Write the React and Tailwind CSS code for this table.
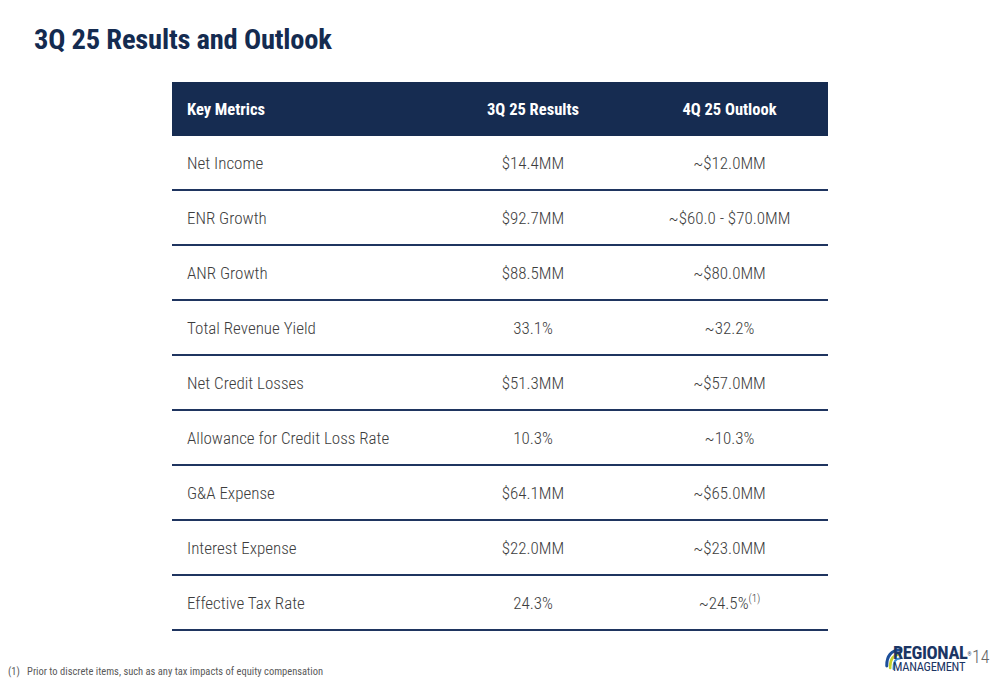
import React from "react";

const font = { fontFamily: "'Roboto Condensed','Liberation Sans Narrow','DejaVu Sans Condensed',sans-serif" };

const rows = [
  ["Net Income", "$14.4MM", "~$12.0MM"],
  ["ENR Growth", "$92.7MM", "~$60.0 - $70.0MM"],
  ["ANR Growth", "$88.5MM", "~$80.0MM"],
  ["Total Revenue Yield", "33.1%", "~32.2%"],
  ["Net Credit Losses", "$51.3MM", "~$57.0MM"],
  ["Allowance for Credit Loss Rate", "10.3%", "~10.3%"],
  ["G&A Expense", "$64.1MM", "~$65.0MM"],
  ["Interest Expense", "$22.0MM", "~$23.0MM"],
  ["Effective Tax Rate", "24.3%", "~24.5%"],
];

function Logo() {
  return (
    <div className="relative w-[84px] h-[26px]">
      <svg width="16" height="26" viewBox="0 0 16 26" className="absolute left-0 top-0">
        <path d="M15 2 C6.5 2 1.5 8 1.8 18" stroke="#1d4f9a" strokeWidth="3" fill="none" strokeLinecap="round" />
        <path d="M15 6.5 C8.5 6.5 4.8 11 5.2 20" stroke="#c5d22b" strokeWidth="2.6" fill="none" strokeLinecap="round" />
        <path d="M15 10.5 C10.5 10.5 8.2 14 8.5 21" stroke="#3a8fd6" strokeWidth="2" fill="none" strokeLinecap="round" />
      </svg>
      <div className="absolute left-[8px] top-[-2px] flex flex-col">
        <span className="text-[18.5px] font-bold text-[#1b3564] tracking-[-0.4px] leading-[15px]">
          REGIONAL<span className="text-[5px] align-top relative top-[1px]">®</span>
        </span>
        <span className="text-[12.5px] text-[#1b3564] tracking-[-0.3px] leading-[12px]">MANAGEMENT</span>
      </div>
    </div>
  );
}

export default function App() {
  return (
    <div className="w-[1000px] h-[685px] bg-white relative overflow-hidden" style={font}>
      <h1 className="pl-[34px] pt-[22px] text-[28.5px] font-bold text-[#142b50] leading-[36px] tracking-[-0.2px]">
        3Q 25 Results and Outlook
      </h1>
      <div className="ml-[172px] mt-[24px] w-[656px]">
        <div className="flex h-[54px] items-center bg-[#162c51] text-white font-bold text-[16.5px] pt-[2px]">
          <div className="w-[263px] pl-[15px]">Key Metrics</div>
          <div className="w-[196px] text-center">3Q 25 Results</div>
          <div className="w-[197px] text-center">4Q 25 Outlook</div>
        </div>
        {rows.map((r, i) => (
          <div
            key={i}
            className="flex h-[55px] items-center border-b-2 border-[#1f3560] text-[#3d3d3d] font-light text-[17px] pt-[2px]"
          >
            <div className="w-[263px] pl-[15px]">{r[0]}</div>
            <div className="w-[196px] text-center">{r[1]}</div>
            <div className="w-[197px] text-center">
              {r[2]}
              {i === rows.length - 1 && <span className="text-[11px] relative top-[-7px]">(1)</span>}
            </div>
          </div>
        ))}
      </div>
      <div className="absolute left-[8px] top-[664px] text-[10.5px] font-normal text-[#5a5a5a]">
        (1)&nbsp;&nbsp;&nbsp;Prior to discrete items, such as any tax impacts of equity compensation
      </div>
      <div className="absolute left-[885px] top-[648px] flex items-start gap-[3px]">
        <Logo />
        <span className="text-[18px] text-[#666] font-light leading-[22px] mt-[-2px]">14</span>
      </div>
    </div>
  );
}
